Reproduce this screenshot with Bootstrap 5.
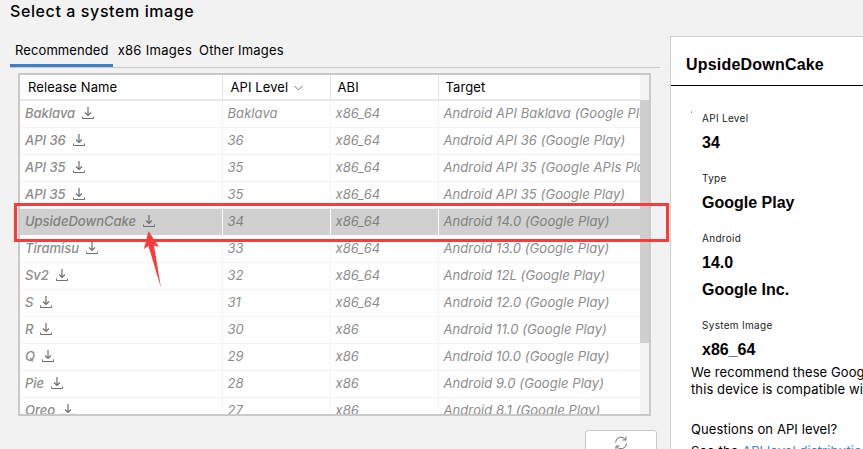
<!DOCTYPE html>
<html lang="en">
<head>
<meta charset="utf-8">
<title>Select a system image</title>
<link href="https://cdn.jsdelivr.net/npm/bootstrap@5.3.0/dist/css/bootstrap.min.css" rel="stylesheet">
<style>
html,body{height:449px;overflow:hidden}
body{background:#f2f2f2;font-family:Inter,"Liberation Sans",sans-serif;font-size:13px;color:#000;position:relative}
.shell{height:449px;padding:0 0 0 10px;gap:10px}
.leftpane{width:650px;flex:none}
.leftpane>*{flex:none}
.ttl{font-size:16px;font-weight:500;letter-spacing:.6px;line-height:20px;padding-top:1px;height:36px;margin:0}
.tabrow{height:32px;border-bottom:1px solid #c9c9c9;margin-top:0}
.tabrow .nav-link{color:#000;padding:5px 5px 0;height:31px;line-height:18px;font-size:13px;border:0;background:none;border-radius:0;letter-spacing:.3px}
.tabrow .nav-link.active{color:#000;box-shadow:inset 0 -3px 0 #3f7fc6;padding:5px 4px 0 5px;letter-spacing:.1px}
.tabrow .nav-item:nth-child(3) .nav-link{padding-left:2px;letter-spacing:.17px}
.tbox{margin:5px 0 0 8px;width:633px;height:343px;border:2px solid #c9c9c9;background:#fff;overflow:hidden}
.tscroll{width:620px;flex:none;overflow:hidden}
.tbl{table-layout:fixed;width:620px;margin:0;border-collapse:collapse}
.tbl th{height:25px;padding:0 0 0 8px;font-weight:400;font-size:13px;line-height:23px;background:#fff;border:0;border-bottom:2px solid #e8e8e8;border-right:1px solid #e2e2e2;color:#000;box-shadow:none;letter-spacing:.1px}
.tbl th:nth-child(n+3){padding-left:7px}
.tbl td{height:27px;padding:0 0 2px 5px;font-style:italic;font-size:13px;line-height:24px;color:#8c8c8c;border:0;border-bottom:1px solid #f4f4f4;border-right:1px solid #f4f4f4;white-space:nowrap;overflow:hidden;background:#fff;box-shadow:none;letter-spacing:.08px}
.tbl td:first-child{font-weight:500;letter-spacing:-.02px}
.tbl tr.sel td{background:#d0d0d0;border-color:#fff;color:#7f7f7f}
.tbl tr.sel td:last-child{border-right-color:#d0d0d0}
.dl{width:14px;height:14px;margin-left:6px;vertical-align:-2px}
.sort{width:9px;height:6px;margin-left:6px;vertical-align:1px}
.sbar{width:11px;flex:none;background:#f4f4f4}
.scap{height:25px;background:#f4f4f4}
.sthumb{height:243px;background:#cfcfcf}
.rfbtn{width:72px;height:24px;margin:14px 0 0 575px;padding:0;background:#fff;border:1px solid #c9c9c9;border-radius:3px 3px 0 0;line-height:1}
.detail{flex:1 1 auto;margin-top:36px;background:#fff;border:1px solid #d0d0d0;border-right:0;border-bottom:0;overflow:hidden;white-space:nowrap}
.dhead{height:49px;border-bottom:1px solid #000;padding:16px 0 0 15px;font-size:16px;font-weight:700;line-height:24px;font-family:"Liberation Sans",sans-serif;letter-spacing:.2px}
.dbody{padding-top:25px}
.lbl{font-size:10px;line-height:14px;padding-left:31px;color:#222;height:14px;letter-spacing:.3px}
.val{font-size:16px;font-weight:700;line-height:22px;padding-left:31px;margin-top:7px;font-family:"Liberation Sans",sans-serif;margin-bottom:18px}
.val.v1{margin-bottom:17px}
.val.v2{margin-bottom:17px}
.val.v3{margin-top:-20px;margin-bottom:17px;padding-top:7px}
.val.gap0{margin-bottom:0;margin-top:0;padding-top:7px;height:32px}
.para{padding-left:20px;font-size:13px;line-height:17px;letter-spacing:.1px}
.para.q{margin-top:23px}
.para.s{margin-top:5px}
.para a{color:#3f7fc6;text-decoration:none}
.notes{position:absolute;left:0;top:0;width:863px;height:449px;pointer-events:none}
</style>
</head>
<body>
<div class="shell d-flex">
  <div class="leftpane d-flex flex-column">
    <h1 class="ttl">Select a system image</h1>
    <ul class="nav tabrow">
      <li class="nav-item"><a class="nav-link active" href="#">Recommended</a></li>
      <li class="nav-item"><a class="nav-link" href="#">x86 Images</a></li>
      <li class="nav-item"><a class="nav-link" href="#">Other Images</a></li>
    </ul>
    <div class="tbox d-flex">
      <div class="tscroll">
        <table class="table tbl">
          <colgroup><col style="width:202px"><col style="width:108px"><col style="width:108px"><col style="width:202px"></colgroup>
          <thead><tr><th>Release Name</th><th>API Level<svg class="sort" viewBox="0 0 9 6"><path d="M.5 1 4.5 5 8.5 1" fill="none" stroke="#777"/></svg></th><th>ABI</th><th>Target</th></tr></thead>
          <tbody id="rows"></tbody>
        </table>
      </div>
      <div class="sbar"><div class="scap"></div><div class="sthumb"></div></div>
    </div>
    <button class="btn rfbtn" type="button" aria-label="Refresh"><svg width="18" height="16" viewBox="0 0 18 16" fill="none" stroke="#6e6e6e" stroke-width="1"><path d="M3.500 7.500A5.500 5.500 0 0 1 13.500 4.500"/><path d="M14 1.500v3.500h-3.500"/><path d="M14.500 8.500A5.500 5.500 0 0 1 4.500 11.500"/><path d="M4 14.500v-3.500h3.500"/></svg></button>
  </div>
  <div class="detail">
    <div class="dhead">UpsideDownCake</div>
    <div class="dbody">
      <div class="lbl">API Level</div><div class="val v1">34</div>
      <div class="lbl">Type</div><div class="val v2">Google Play</div>
      <div class="lbl">Android</div><div class="val">14.0</div>
      <div class="val v3">Google Inc.</div>
      <div class="lbl">System Image</div><div class="val gap0">x86_64</div>
      <div class="para">We recommend these Google Play images because<br>this device is compatible with Google Play.</div>
      <div class="para q">Questions on API level?</div>
      <div class="para s">See the <a href="#">API level distribution chart</a></div>
    </div>
  </div>
</div>
<svg class="notes" viewBox="0 0 863 449">
  <rect x="15.500" y="204.500" width="652" height="36" fill="none" stroke="#f93b3b" stroke-width="3"/>
  <path d="M148.500 231 159 247 154 245.500 161 288 148.500 246 144 249Z" fill="#f93b3b"/>
  <circle cx="691.500" cy="112" r=".5" fill="#000"/>
</svg>
<script>
var d=[["Baklava","Baklava","x86_64","Android API Baklava (Google Play)"],["API 36","36","x86_64","Android API 36 (Google Play)"],["API 35","35","x86_64","Android API 35 (Google APIs Play)"],["API 35","35","x86_64","Android API 35 (Google Play)"],["UpsideDownCake","34","x86_64","Android 14.0 (Google Play)"],["Tiramisu","33","x86_64","Android 13.0 (Google Play)"],["Sv2","32","x86_64","Android 12L (Google Play)"],["S","31","x86_64","Android 12.0 (Google Play)"],["R","30","x86","Android 11.0 (Google Play)"],["Q","29","x86","Android 10.0 (Google Play)"],["Pie","28","x86","Android 9.0 (Google Play)"],["Oreo","27","x86","Android 8.1 (Google Play)"]];
var ic='<svg class="dl" viewBox="0 0 14 14" fill="none" stroke="#6e6e6e" stroke-width="1"><path d="M7 1v8M4 6.500 7 9.500 10 6.500" stroke-width="1.200"/><path d="M1.500 10.500v2h11v-2"/></svg>';
document.getElementById('rows').innerHTML=d.map(function(r,i){return '<tr'+(i==4?' class="sel"':'')+'><td>'+r[0]+ic+'</td><td>'+r[1]+'</td><td>'+r[2]+'</td><td>'+r[3]+'</td></tr>'}).join('');
</script>
</body>
</html>
